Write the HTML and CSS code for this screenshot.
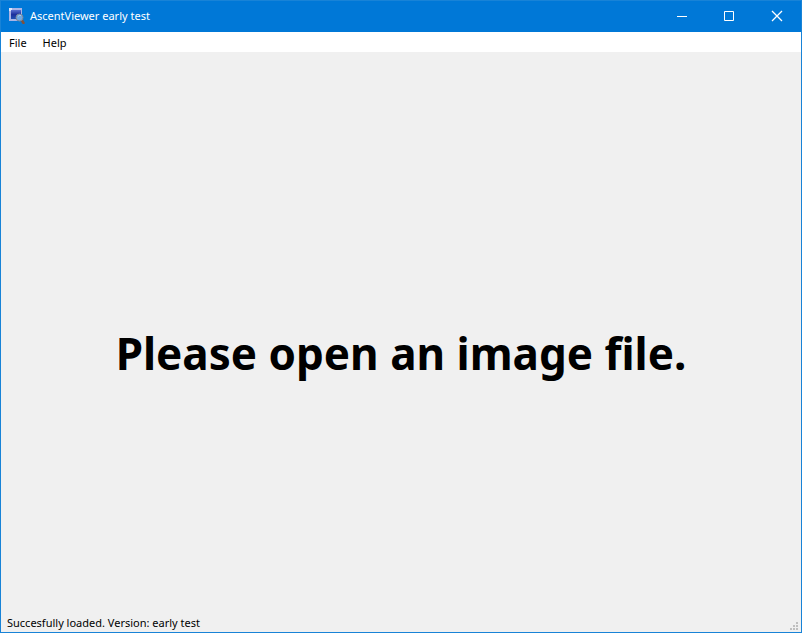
FILE: index.html
```html
<!DOCTYPE html>
<html lang="en">
<head>
<meta charset="utf-8">
<title>AscentViewer early test</title>
<link rel="stylesheet" href="styles.css">
</head>
<body>
<div class="window">
  <header class="titlebar">
    <svg class="app-icon" viewBox="0 0 16 16" aria-hidden="true">
      <defs>
        <linearGradient id="screen" x1="0" y1="0" x2="0" y2="1">
          <stop offset="0" stop-color="#5a6fd0"/>
          <stop offset="0.500" stop-color="#1c2f9c"/>
          <stop offset="1" stop-color="#1e50b4"/>
        </linearGradient>
      </defs>
      <path d="M0 0h13v13H0z" fill="#a9b4e6"/>
      <path d="M0 0h3v3H0z" fill="#dfe5fa"/>
      <path d="M2 2h10v9H2z" fill="url(#screen)"/>
      <path d="M13 12.500l1.500 2.500" stroke="#80523c" stroke-width="2.500" stroke-linecap="round"/>
      <circle cx="10.500" cy="9.500" r="3.500" fill="#6fa8e0" stroke="#7d8596"/>
      <path d="M9 8.500q1-1.500 3-1" fill="none" stroke="#a8cdf0"/>
    </svg>
    <h1 class="title">AscentViewer early test</h1>
    <div class="controls">
      <button class="control" aria-label="Minimize"><svg viewBox="0 0 10 10"><path d="M1 5.500h10"/></svg></button>
      <button class="control" aria-label="Maximize"><svg viewBox="0 0 10 10"><path d="M.5.5h9v9h-9z"/></svg></button>
      <button class="control" aria-label="Close"><svg viewBox="0 0 10 10"><path d="M0 0l10 10M10 0L0 10" stroke-width="1.300"/></svg></button>
    </div>
  </header>
  <nav class="menubar">
    <button class="menu">File</button>
    <button class="menu">Help</button>
  </nav>
  <main class="viewer"><p class="message">Please open an image file.</p></main>
  <footer class="statusbar">
    <span class="status">Succesfully loaded. Version: early test</span>
    <svg class="grip" viewBox="0 0 8 8" aria-hidden="true"><path d="M6 0h2v2h-2zM3 3h2v2h-2zM6 3h2v2h-2zM0 6h2v2h-2zM3 6h2v2h-2zM6 6h2v2h-2z"/></svg>
  </footer>
</div>
</body>
</html>
```
FILE: styles.css
```css
* { box-sizing: border-box; }
body { margin: 0; font: 11px/16px "Noto Sans", "Open Sans", sans-serif; color: #000; }
.window { display: flex; flex-direction: column; min-height: 100vh; border: 1px solid #1883d7; background: #f0f0f0; }
.titlebar { display: flex; align-items: center; height: 31px; padding-bottom: 1px; padding-left: 8px; background: #0078d7; color: #fff; }
.app-icon { width: 16px; height: 16px; }
.title { margin: 0 auto 0 5px; font-size: 11px; font-weight: 400; }
.controls { display: flex; align-self: stretch; }
.control { display: grid; place-items: center; width: 48px; padding: 0; border: 0; background: none; }
.control svg { width: 10px; height: 10px; overflow: visible; fill: none; stroke: #fff; }
.menubar { display: flex; height: 20px; background: #fff; }
.menu { padding: 2px 8px 0; border: 0; background: none; font: inherit; color: inherit; }
.viewer { flex: 1; display: grid; place-items: center; padding-top: 42px; }
.message { margin: 0; font: bold 44px/52px "Noto Sans", sans-serif; text-align: center; }
.statusbar { display: flex; align-items: center; justify-content: space-between; height: 20px; padding: 2px 2px 0 6px; }
.grip { align-self: flex-end; width: 8px; height: 8px; margin: 2px 1px; fill: #bfbfbf; }
```
